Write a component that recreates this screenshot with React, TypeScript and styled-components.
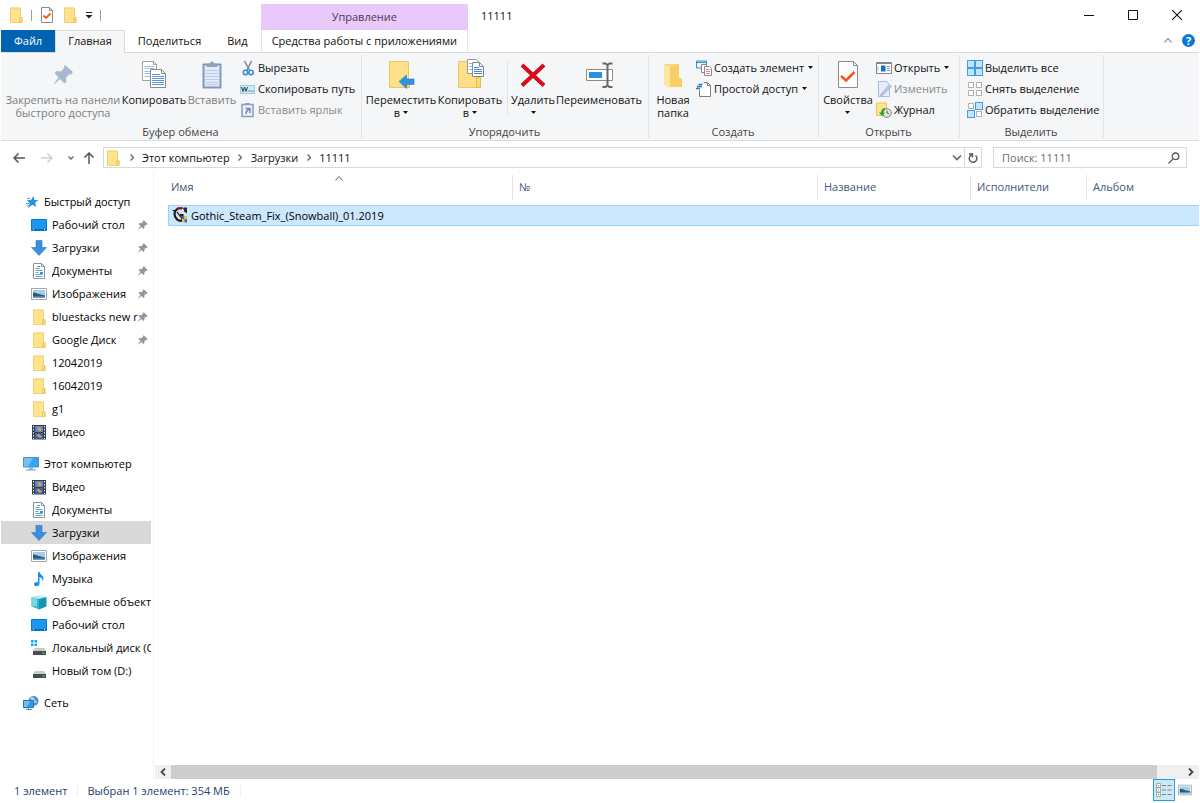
import React from 'react';
import styled, { createGlobalStyle } from 'styled-components';

const Global = createGlobalStyle`
  * { box-sizing: border-box; }
  body {
    margin: 0;
    background: #fff;
    color: #111;
    font: 11px/13px "Open Sans", "Noto Sans", sans-serif;
  }
  button, input { font: inherit; color: inherit; margin: 0; }
  button { border: 0; background: none; padding: 0; cursor: default; }
  svg { display: block; flex: none; }
  ul, ol { list-style: none; margin: 0; padding: 0; }
`;

/* ---------- icons ---------- */

type IconProps = { size?: number };

const Svg = ({ w, h, vb, children }: { w: number; h?: number; vb: string; children: React.ReactNode }) => (
  <svg width={w} height={h ?? w} viewBox={vb} fill="none" aria-hidden="true">{children}</svg>
);

const FolderIcon = ({ size = 16 }: IconProps) => (
  <Svg w={size} vb="0 0 16 16">
    <path d="M2 .5h10.500v10l1.500 1v4H2z" fill="#ffe38f" />
    <path d="M2.500 1h10v9.500h1.500v5H2.500z" stroke="#f0d070" />
    <path d="M11.500 15.500v-4l1-1.500 1.500 1v4.500z" fill="#f9da80" stroke="#e9c356" strokeWidth=".8" />
  </Svg>
);

const CheckDocIcon = ({ size = 16 }: IconProps) => (
  <Svg w={size} vb="0 0 16 16">
    <path d="M2.500.5h8l3 3v12h-11z" fill="#fff" stroke="#8c8c8c" />
    <path d="M10.500.5v3h3" stroke="#8c8c8c" />
    <path d="M4.500 8.500 7 11l4.500-4.500" stroke="#f0581e" strokeWidth="1.800" />
  </Svg>
);

const PropertiesIcon = () => (
  <Svg w={32} vb="0 0 32 32">
    <path d="M6.500 2.500h15l4 4v22h-19z" fill="#fdfdfd" stroke="#8c8c8c" />
    <path d="M21.500 2.500v4h4" stroke="#8c8c8c" />
    <path d="m9 17 5 4.500 8.500-8.500" stroke="#f0581e" strokeWidth="2.500" />
  </Svg>
);

const PinBigIcon = () => (
  <Svg w={32} vb="0 0 32 32">
    <path d="m18 6 8 7-2 2.500-1.500-.5-3.500 3.500.5 4-2 2-4.500-4.500L7.500 25l-.5-.5L11.500 18.500l-4-4.500 2-2 4.500.5 3.500-4-.8-1.500z" fill="#a9b8cd" />
  </Svg>
);

const CopyIcon = () => (
  <Svg w={32} vb="0 0 32 32">
    <path d="M4.500 2.500h11l3 3v16h-14z" fill="#fff" stroke="#a2a2a2" />
    <path d="M15.500 2.500v3h3" stroke="#a2a2a2" />
    <path d="M6.500 7.500h10M6.500 9.500h10M6.500 12.500h6M6.500 14.500h6M6.500 17.500h6" stroke="#9dbdea" />
    <path d="M12.500 10.500h11l4 4v14h-15z" fill="#fff" stroke="#8a8a8a" />
    <path d="M23.500 10.500v4h4" stroke="#8a8a8a" />
    <path d="M14 15.500h8M14 17.500h12M14 19.500h12M14 21.500h12M14 23.500h12M14 25.500h12" stroke="#5b93e0" />
  </Svg>
);

const PasteIcon = () => (
  <Svg w={32} vb="0 0 32 32">
    <path d="M7.500 5.500h17v23h-17z" fill="#e2eaf7" stroke="#8197bd" strokeWidth="2" />
    <path d="M11 8V4.500h3a2 2 0 0 1 4 0h3V8z" fill="#8fa0bd" />
    <path d="M9.500 11.500h13M9.500 14.500h13M9.500 17.500h13M9.500 20.500h13M9.500 23.500h13M9.500 25.500h13" stroke="#bccbe4" />
  </Svg>
);

const ScissorsIcon = () => (
  <Svg w={16} vb="0 0 16 16">
    <path d="m4.500 1 5.500 10M11.500 1l-5 10" stroke="#7b8794" strokeWidth="1.500" />
    <circle cx="5.500" cy="12.500" r="2.200" stroke="#2f8fd0" strokeWidth="1.600" />
    <circle cx="11" cy="12.500" r="2.200" stroke="#2f8fd0" strokeWidth="1.600" />
  </Svg>
);

const PathIcon = () => (
  <Svg w={16} vb="0 0 16 16">
    <path d="M.5 4.500h14v8H.5z" fill="#cfe9f8" stroke="#9ccbe6" />
    <path d="m1.500 6 1.500 4.500L4.500 6 6 10.500 7.500 6M8.500 10h1M10.500 10h1M12.500 10h1" stroke="#24384a" />
  </Svg>
);

const ShortcutIcon = () => (
  <Svg w={16} vb="0 0 16 16">
    <path d="M2 2.500h11v12H2z" fill="#eef3fb" stroke="#8ba0c4" strokeWidth="1.600" />
    <path d="M5 3V1h5v2z" fill="#8ba0c4" />
    <path d="M5.500 6.500h4.500V11M9.500 7C7 8 6 9 6 12" stroke="#7188b5" strokeWidth="1.500" />
  </Svg>
);

const MoveToIcon = () => (
  <Svg w={32} vb="0 0 32 32">
    <path d="M4.500 2.500h19v26h-19z" fill="#ffe08a" stroke="#ecc860" />
    <path d="M21.500 28.500v-6h3v6z" fill="#fbd978" stroke="#e6bd4d" />
    <path d="m14 22.500 7.500-6.500v4H29v5.500h-7.500v4z" fill="#2f93e0" stroke="#1f7cc6" strokeWidth=".6" />
  </Svg>
);

const CopyToIcon = () => (
  <Svg w={32} vb="0 0 32 32">
    <path d="M4.500 2.500h19v26h-19z" fill="#ffe08a" stroke="#ecc860" />
    <path d="M22.500 28.500v-10h4v10z" fill="#fbd978" stroke="#e6bd4d" />
    <path d="M13.500.5h9l3 3v11h-12z" fill="#fff" stroke="#9a9a9a" />
    <path d="M15 4.500h5M15 7.500h5M15 10.500h5" stroke="#8db4e8" />
    <path d="M18.500 3.500h7l4 4v10h-11z" fill="#fff" stroke="#808a96" />
    <path d="M25.500 3.500v4h4" stroke="#808a96" />
    <path d="M20 8.500h5M20 10.500h8M20 12.500h8M20 14.500h8" stroke="#3f83dc" />
  </Svg>
);

const DeleteIcon = () => (
  <Svg w={32} vb="0 0 32 32">
    <path d="m5 6 22 20.500M27 6 5 26.500" stroke="#d60b17" strokeWidth="4" />
  </Svg>
);

const RenameIcon = () => (
  <Svg w={32} vb="0 0 32 32">
    <path d="M3.500 10.500h26v11h-26z" fill="#fff" stroke="#8c8c8c" />
    <path d="M6 13h13v6H6z" fill="#2b8fe3" />
    <path d="M24.500 5v22M19.500 4.500h3l2 1.500 2-1.500h3M19.500 28h3l2-1.500 2 1.500h3" stroke="#666" strokeWidth="2" />
  </Svg>
);

const NewFolderIcon = () => (
  <Svg w={32} vb="0 0 32 32">
    <path d="M7 5h15v14l3 1v8H10z" fill="#fbd772" />
    <path d="m7 5 6 3v22l-6-4z" fill="#ffe6a0" />
    <path d="m13 8 9-3v14l3 1v8H13z" fill="#f7cf66" />
  </Svg>
);

const NewItemIcon = () => (
  <Svg w={16} vb="0 0 16 16">
    <path d="M.5 1h10v7H.5z" fill="#e4f3fc" stroke="#3c8dbb" />
    <path d="M.5 2.500h10" stroke="#3c8dbb" />
    <path d="M5.500 4.500h5v8h-5z" fill="#fff" stroke="#8a8a8a" />
    <path d="M8.500 6.500h5l2 2v7h-7z" fill="#fff" stroke="#8a8a8a" />
    <path d="M10 9.500h4M10 11.500h4M10 13.500h4" stroke="#c68ba0" />
  </Svg>
);

const EasyAccessIcon = () => (
  <Svg w={16} vb="0 0 16 16">
    <path d="M7.500 1.500h4l3 3v11h-11V9" fill="#fff" stroke="#808080" />
    <path d="M11.500 1.500v3h3" stroke="#808080" />
    <path d="M2.500 3.500h4M1 5.500h5M0 7.500h4" stroke="#2a78c2" strokeWidth="1.300" />
  </Svg>
);

const OpenIcon = () => (
  <Svg w={16} vb="0 0 16 16">
    <path d="M.5 2.500h15v11H.5z" fill="#fff" stroke="#7e868e" />
    <path d="M.5 3.500h15" stroke="#7e868e" />
    <path d="M5 5.500h4.500v6H5z" fill="#0f6fd0" />
    <path d="M2 6v5.500" stroke="#b9c2cc" />
    <path d="M11 6.500h3M11 8.500h3M11 10.500h3" stroke="#8a929a" />
  </Svg>
);

const EditIcon = () => (
  <Svg w={16} vb="0 0 16 16">
    <path d="M2.500.5h8l3 3v12h-11z" fill="#e6eefb" stroke="#a9bcdc" />
    <path d="m5 13 8.500-9.500 2 2L7 14l-3 1z" fill="#b8c9e4" stroke="#93a9cf" strokeWidth=".7" />
  </Svg>
);

const HistoryIcon = () => (
  <Svg w={16} vb="0 0 16 16">
    <path d="M.5 1h10v12.500H.5z" fill="#ffe48d" stroke="#e8c552" />
    <circle cx="11" cy="11" r="4.300" fill="#e4e8e6" stroke="#7d8583" />
    <path d="M11 8.500V11l2 1" stroke="#555" />
    <path d="M3 10.500h2c0-3 2-4.500 4-4.500v2c-1 .5-1.500 1.200-1.700 2.500H9l-2.800 3.700z" fill="#2aa62c" />
  </Svg>
);

const Cells = ({ on }: { on: boolean[] }) => (
  <Svg w={16} vb="0 0 16 16">
    {on.map((active, i) => {
      const x = (i % 2) * 8;
      const y = Math.floor(i / 2) * 8;
      return active
        ? <rect key={i} x={x + 0.5} y={y + 0.5} width="7" height="7" fill="#c3e4fb" stroke="#3f9fe6" />
        : <rect key={i} x={x + 1.5} y={y + 1.5} width="5" height="5" fill="#fff" stroke="#b3b3b3" />;
    })}
  </Svg>
);

const StarIcon = () => (
  <Svg w={16} vb="0 0 16 16">
    <path d="m10.500 2 .8 4h4.200l-3.300 2.500 1 4.500-3.800-2.300L5 14l1.700-4.700L4 6.300l4-.2z" fill="#2492dd" />
    <path d="M4 4.500h3M3 9.500h3M3.500 12h3" stroke="#4ba7e4" />
  </Svg>
);

const DesktopIcon = () => (
  <Svg w={16} vb="0 0 16 16">
    <path d="M.5 2.500h15v11H.5z" fill="#1a97f0" stroke="#0c78cb" />
    <path d="M1 12.500h14" stroke="#0a66b5" />
    <path d="M2 12.500h1M13 12.500h1" stroke="#bfe2ff" />
  </Svg>
);

const DownloadIcon = () => (
  <Svg w={16} vb="0 0 16 16">
    <path d="M5 .5h6v7h4.500L8 15.500.5 7.500H5z" fill="#3c8fdc" stroke="#2b78c2" strokeWidth=".6" />
  </Svg>
);

const DocumentIcon = () => (
  <Svg w={16} vb="0 0 16 16">
    <path d="M2.500.5h8l3 3v12h-11z" fill="#fff" stroke="#8d9499" />
    <path d="M10.500.5v3h3" stroke="#8d9499" />
    <path d="M6 3.500h3M4.500 5.500h4M4.500 7.500h7M4.500 9.500h3M4.500 11.500h7M4.500 13.500h7" stroke="#5ba6d8" />
    <path d="M9 9h3v2H9z" fill="#3b92cc" />
  </Svg>
);

const PictureIcon = ({ size = 16 }: IconProps) => (
  <Svg w={size} vb="0 0 16 16">
    <path d="M.5 2.500h15v11H.5z" fill="#fff" stroke="#a8a8a8" />
    <path d="M2 4h12v8H2z" fill="#9fd0f2" />
    <path d="M2 6.500c3 0 6 2 12 3V11H2z" fill="#33586e" />
    <path d="M2 10.500h12V12H2z" fill="#5ea3dc" />
  </Svg>
);

const VideoIcon = () => (
  <Svg w={16} vb="0 0 16 16">
    <path d="M1 1h14v14.500H1z" fill="#3a3f45" />
    <path d="M4 2h8v6H4z" fill="#5b86d8" />
    <path d="M4 9h8v6H4z" fill="#3565b8" />
    <path d="M6 3.500 9 3l2 3-3 1.500zM5 11l3-1 3 2.500-2 1.500z" fill="#d8a13b" />
    <path d="M2.500 2v13M13.500 2v13" stroke="#e8e8e8" strokeDasharray="1.500 1.500" />
  </Svg>
);

const ComputerIcon = () => (
  <Svg w={16} vb="0 0 16 16">
    <path d="M.5 1.500h15v9.500H.5z" fill="#3aa4ee" stroke="#4e90bf" />
    <path d="M1 2h9L5 10.500H1z" fill="#70c2f7" />
    <path d="M6 11.500h4v2H6z" fill="#8fb5cf" />
    <path d="M3 14h10" stroke="#6c9ab9" />
  </Svg>
);

const MusicIcon = () => (
  <Svg w={16} vb="0 0 16 16">
    <path d="M7 1h1.500c.3 2.500 4 3 4 6.500 0 1-.3 2-.9 2.800.2-2.300-1-3.500-3.100-4v6.200c0 1.700-1.300 2.800-3 2.800-1.500 0-2.500-.8-2.500-2 0-1.500 1.500-2.500 4-2.200z" fill="#1e90e8" />
  </Svg>
);

const CubeIcon = () => (
  <Svg w={16} vb="0 0 16 16">
    <path d="m.5 3 7.500-2 7.500 2L8 5z" fill="#bcecf4" />
    <path d="M.5 3 8 5v10.500l-7.500-3z" fill="#37b7cf" />
    <path d="M15.500 3 8 5v10.500l7.500-3z" fill="#1593b1" />
    <path d="m.5 3 5.500 1.500V12l-5.500.5z" fill="#74d6e4" />
  </Svg>
);

const Drive = ({ system }: { system?: boolean }) => (
  <Svg w={16} vb="0 0 16 16">
    {system && <path d="M0 0h2.500v2.500H0zM3.500 0H6v2.500H3.500zM0 3.500h2.500V6H0zM3.500 3.500H6V6H3.500z" fill="#16a5e8" />}
    <path d="m4 8h9l2 3H2z" fill="#c9cccf" />
    <path d="M2 11h13v4H2z" fill="#4a4d50" />
    <path d="M11.500 13h2" stroke="#49e04b" strokeWidth="1.300" />
  </Svg>
);

const NetworkIcon = () => (
  <Svg w={16} vb="0 0 16 16">
    <circle cx="10.500" cy="6" r="5" fill="#4b93c4" />
    <path d="M7 3c2-2 3-1 4 0s1 3 3 4c-1 2-4 1-5-1S8 5 7 3z" fill="#a8cfe6" />
    <path d="M.5 5.500h10v7H.5z" fill="#2f9ae6" stroke="#2b75aa" />
    <path d="M1 6h6l-3 6H1z" fill="#6dbef5" />
    <path d="M3 14.500h6M5.500 13v1" stroke="#4b88b2" />
  </Svg>
);

const PinIcon = () => (
  <Svg w={10} vb="0 0 10 10">
    <path d="M5.800.3 9.700 4l-1 .9-.8-.2-1.600 1.700.2 1.700-1 1-2.100-2.200L.5 9.500 0 9.300 2.500 6 .5 4l1-1 1.800.2L5 1.800l-.1-.7z" fill="#8f99a3" />
  </Svg>
);

const GothicIcon = () => (
  <Svg w={16} vb="0 0 16 16">
    <path d="M10 1.500C6 .5 2.500 3 2.500 7s4 8 8 6.500V8H8" stroke="#1b1b1b" strokeWidth="2.200" />
    <path d="M.5 3.500h3" stroke="#1b1b1b" />
    <path d="M5 1.500C8 0 11 .5 13 3" stroke="#c6201c" strokeWidth="1.300" />
    <path d="M12 .5h3v6l-3-2z" fill="#2a2a2a" />
    <path d="m5 5 7 9" stroke="#8a1515" strokeWidth="1.300" />
    <path d="M10 9h2.500v3H10z" fill="#2d6fd6" />
    <path d="M12.500 9H15v3h-2.500z" fill="#f1c232" />
    <path d="M10 12h2.500v3.500H10z" fill="#f1c232" />
    <path d="M12.500 12H15v3.500h-2.500z" fill="#2d6fd6" />
  </Svg>
);

const DetailsIcon = () => (
  <Svg w={16} vb="0 0 16 16">
    <path d="M.5 1.500h4v4h-4zM.5 6h4v4h-4zM.5 10.500h4v4h-4z" fill="#fff" stroke="#a5a9ad" />
    <path d="M2 3.500h1M2 12.500h1" stroke="#d0574d" />
    <path d="M2 8h1" stroke="#4d9cd0" />
    <path d="M6 3.500h4M11.500 3.500h4M6 8h4M11.500 8h4M6 12.500h4M11.500 12.500h4" stroke="#7a8187" />
  </Svg>
);

const Caret = () => (
  <Svg w={5} h={3} vb="0 0 5 3"><path d="M0 0h5L2.500 3z" fill="#111" /></Svg>
);

const CustomizeIcon = () => (
  <Svg w={8} h={7} vb="0 0 8 7"><path d="M1 .5h6" stroke="#222" /><path d="M.5 3h7L4 6.500z" fill="#222" /></Svg>
);

const Chevron = ({ d, w = 8, h = 8, color = '#666', weight = 1.3 }: { d: string; w?: number; h?: number; color?: string; weight?: number }) => (
  <Svg w={w} h={h} vb={`0 0 ${w} ${h}`}><path d={d} stroke={color} strokeWidth={weight} /></Svg>
);

/* ---------- window frame ---------- */

const Window = styled.div`
  display: flex;
  flex-direction: column;
  min-height: 100vh;
  padding: 0 1px;
`;

const Header = styled.header`
  display: grid;
  grid-template-columns: auto auto 1fr;
`;

const HeaderStack = styled.div`
  display: grid;
  grid-template-rows: 30px 22px;
  min-width: 0;
`;

const QuickAccess = styled.div`
  display: flex;
  align-items: center;
  gap: 7px;
  padding-left: 7px;
`;

const ToolButton = styled.button`
  display: flex;
  align-items: center;
  justify-content: center;
`;

const Divider = styled.span<{ $h: number; $color?: string }>`
  width: 1px;
  height: ${p => p.$h}px;
  background: ${p => p.$color ?? '#9a9a9a'};
`;

const Tabs = styled.nav`
  display: flex;
`;

const Tab = styled.button<{ $kind?: 'file' | 'active' }>`
  position: relative;
  z-index: 1;
  padding: 0 13px 1px;
  white-space: nowrap;
  ${p => p.$kind === 'file' && 'background: #0063b1; color: #fff;'}
  ${p => p.$kind === 'active' && `
    background: #f5f6f7;
    border: 1px solid #dadbdc;
    border-bottom: 0;
    padding: 0 12px 3px;
    margin-bottom: -1px;
  `}
`;

const ContextTitle = styled.div`
  display: grid;
  place-items: center;
  margin-top: 4px;
  padding-bottom: 2px;
  background: #e9c9fc;
  color: #4a3a55;
`;

const ContextTab = styled(Tab)`
  padding: 0 10px 1px;
  border: solid #e4e4e4;
  border-width: 0 1px;
`;

const TitleRow = styled.div`
  display: flex;
  align-items: center;
  padding-left: 13px;
`;

const TitleText = styled.h1`
  flex: 1;
  margin: 0;
  font-size: 11px;
  font-weight: 400;
`;

const CaptionButton = styled(ToolButton)`
  width: 44px;
  height: 28px;
`;

const HelpRow = styled.div`
  display: flex;
  align-items: center;
  justify-content: flex-end;
  gap: 10px;
  padding: 0 4px 2px 0;
`;

const HelpButton = styled.button`
  width: 13px;
  height: 13px;
  border-radius: 50%;
  background: #0b78d7;
  color: #fff;
  font-weight: 700;
`;

/* ---------- ribbon ---------- */

const Ribbon = styled.div`
  display: flex;
  background: #f5f6f7;
  border: solid #dadbdc;
  border-width: 1px 0;
`;

const Group = styled.section<{ $w: number }>`
  display: flex;
  flex-direction: column;
  flex: 0 1 ${p => p.$w}px;
  height: 87px;
  padding-left: 4px;
  background: linear-gradient(#e2e3e4, #e2e3e4) right 2px / 1px 83px no-repeat;
`;

const GroupBody = styled.div`
  display: flex;
  flex: 1;
  align-items: flex-start;
`;

const GroupName = styled.h2`
  margin: 0 0 2px;
  padding-right: 6px;
  font-size: 11px;
  font-weight: 400;
  text-align: center;
  color: #444;
`;

const BigButton = styled.button<{ $w: number }>`
  display: flex;
  flex-direction: column;
  align-items: center;
  gap: 2px;
  flex: none;
  width: ${p => p.$w}px;
  padding-top: 6px;
  white-space: nowrap;
  &:disabled { color: #7d7d7d; }
`;

const BigLabel = styled.span`
  display: flex;
  flex-direction: column;
  align-items: center;
`;

const LabelLine = styled.span`
  display: flex;
  align-items: center;
  gap: 3px;
  min-height: 13px;
`;

const SmallColumn = styled.div`
  display: flex;
  flex-direction: column;
  align-items: flex-start;
  padding: 4px 0 0 3px;
`;

const SmallButton = styled.button`
  display: flex;
  align-items: center;
  gap: 2px;
  height: 21px;
  white-space: nowrap;
  &:disabled { color: #8a8a8a; }
`;

const SmallLabel = styled.span`
  padding: 0 2px 1px 0;
`;

const BodyDivider = styled(Divider)`
  margin: 8px 3px 0;
`;

const Big = ({ icon, lines, w, caret, disabled }: { icon: React.ReactNode; lines: string[]; w: number; caret?: boolean; disabled?: boolean }) => (
  <BigButton $w={w} disabled={disabled}>
    {icon}
    <BigLabel>
      {lines.map((line, i) => (
        <LabelLine key={i}>{line}{caret && i === lines.length - 1 && <Caret />}</LabelLine>
      ))}
    </BigLabel>
  </BigButton>
);

const Small = ({ icon, label, caret, disabled }: { icon: React.ReactNode; label: string; caret?: boolean; disabled?: boolean }) => (
  <SmallButton disabled={disabled}>{icon}<SmallLabel>{label}</SmallLabel>{caret && <Caret />}</SmallButton>
);

/* ---------- address bar ---------- */

const AddressRow = styled.div`
  display: flex;
  align-items: center;
  padding: 6px 12px 3px 8px;
`;

const NavButton = styled(ToolButton)<{ $w: number }>`
  width: ${p => p.$w}px;
  height: 20px;
`;

const AddressBox = styled.div`
  display: flex;
  flex: 1;
  height: 21px;
  margin: 0 11px 0 2px;
  border: 1px solid #d9d9d9;
`;

const Crumbs = styled.ol`
  display: flex;
  flex: 1;
  align-items: center;
  padding-left: 1px;
`;

const Crumb = styled.li`
  display: flex;
  align-items: center;
`;

const CrumbLink = styled.a`
  padding-bottom: 1px;
  color: inherit;
  text-decoration: none;
`;

const CrumbArrow = styled.span`
  display: flex;
  justify-content: center;
  width: 21px;
`;

const RefreshButton = styled(ToolButton)`
  width: 17px;
  border-left: 1px solid #d9d9d9;
`;

const SearchBox = styled.label`
  display: flex;
  align-items: center;
  width: 194px;
  height: 21px;
  padding: 0 6px 0 8px;
  border: 1px solid #d9d9d9;
`;

const SearchInput = styled.input`
  flex: 1;
  min-width: 0;
  padding: 0 0 1px;
  border: 0;
  outline: 0;
  background: none;
  &::placeholder { color: #6d6d6d; opacity: 1; }
`;

/* ---------- body ---------- */

const Body = styled.div`
  display: flex;
  flex: 1;
`;

const Sidebar = styled.nav`
  display: flex;
  flex-direction: column;
  gap: 9px;
  flex: none;
  width: 153px;
  padding: 19px 2px 0 0;
  border-right: 1px solid #f3f3f3;
  color: #000;
`;

const TreeItem = styled.a<{ $level: number; $selected?: boolean }>`
  display: flex;
  align-items: center;
  gap: 5px;
  height: 23px;
  padding-left: ${p => 14 + p.$level * 8}px;
  color: inherit;
  text-decoration: none;
  white-space: nowrap;
  background: ${p => (p.$selected ? '#d9d9d9' : 'transparent')};
`;

const TreeLabel = styled.span<{ $pinned?: boolean }>`
  flex: 1;
  overflow: hidden;
  min-width: 0;
  line-height: 17px;
  margin-right: ${p => (p.$pinned ? '-5px' : '0')};
`;

const PinSlot = styled.span`
  margin-right: 3px;
`;

const Main = styled.main`
  display: flex;
  flex: 1;
  flex-direction: column;
  min-width: 0;
  padding-left: 1px;
`;

const ListArea = styled.div`
  flex: 1;
  padding: 4px 0 0 13px;
`;

const FileTable = styled.table`
  width: 100%;
  table-layout: fixed;
  border-spacing: 0;
`;

const Th = styled.th<{ $w?: number }>`
  position: relative;
  width: ${p => (p.$w ? `${p.$w}px` : 'auto')};
  padding: 0 0 5px;
  font-weight: 400;
  text-align: left;
  color: #44587c;
`;

const ThLabel = styled.div<{ $first?: boolean; $last?: boolean }>`
  height: 25px;
  padding-left: ${p => (p.$first ? 3 : 6)}px;
  line-height: 24px;
  border-right: ${p => (p.$last ? 0 : 1)}px solid #e3e3e3;
`;

const SortMark = styled.span`
  position: absolute;
  top: 1px;
  left: 50%;
  margin-left: -6px;
`;

const Td = styled.td`
  height: 21px;
  padding: 0;
  background: #cce8ff;
  border: solid #99d1ff;
  border-width: 1px 0;
  &:first-child { border-left-width: 1px; }
`;

const FileName = styled.span`
  display: flex;
  align-items: center;
  gap: 3px;
  padding: 0 0 1px 3px;
  white-space: nowrap;
  color: #000;
`;

const ScrollBar = styled.div`
  display: flex;
  height: 14px;
  background: #f0f0f0;
`;

const ScrollButton = styled(ToolButton)`
  width: 16px;
`;

const ScrollTrack = styled.div`
  flex: 1;
  padding-right: 26px;
`;

const ScrollThumb = styled.div`
  height: 100%;
  background: #cdcdcd;
`;

const StatusBar = styled.footer`
  display: flex;
  align-items: center;
  height: 24px;
  padding: 0 6px 2px 13px;
  color: #26406e;
`;

const StatusText = styled.span`
  padding-right: 10px;
  margin-right: 9px;
  border-right: 1px solid #f0f0f0;
`;

const ViewButtons = styled.div`
  display: flex;
  gap: 2px;
  margin-left: auto;
`;

const ViewButton = styled(ToolButton)<{ $on?: boolean }>`
  width: ${p => (p.$on ? 22 : 16)}px;
  height: 22px;
  background: ${p => (p.$on ? '#cbe8f6' : 'none')};
  border: ${p => (p.$on ? '1px solid #26a0da' : '0')};
`;

/* ---------- data ---------- */

type Node = { label: string; icon: React.ReactNode; pinned?: boolean; selected?: boolean };

const sections: { root: Node; items: Node[] }[] = [
  {
    root: { label: 'Быстрый доступ', icon: <StarIcon /> },
    items: [
      { label: 'Рабочий стол', icon: <DesktopIcon />, pinned: true },
      { label: 'Загрузки', icon: <DownloadIcon />, pinned: true },
      { label: 'Документы', icon: <DocumentIcon />, pinned: true },
      { label: 'Изображения', icon: <PictureIcon />, pinned: true },
      { label: 'bluestacks new r', icon: <FolderIcon />, pinned: true },
      { label: 'Google Диск', icon: <FolderIcon />, pinned: true },
      { label: '12042019', icon: <FolderIcon /> },
      { label: '16042019', icon: <FolderIcon /> },
      { label: 'g1', icon: <FolderIcon /> },
      { label: 'Видео', icon: <VideoIcon /> },
    ],
  },
  {
    root: { label: 'Этот компьютер', icon: <ComputerIcon /> },
    items: [
      { label: 'Видео', icon: <VideoIcon /> },
      { label: 'Документы', icon: <DocumentIcon /> },
      { label: 'Загрузки', icon: <DownloadIcon />, selected: true },
      { label: 'Изображения', icon: <PictureIcon /> },
      { label: 'Музыка', icon: <MusicIcon /> },
      { label: 'Объемные объекты', icon: <CubeIcon /> },
      { label: 'Рабочий стол', icon: <DesktopIcon /> },
      { label: 'Локальный диск (C:)', icon: <Drive system /> },
      { label: 'Новый том (D:)', icon: <Drive /> },
    ],
  },
  { root: { label: 'Сеть', icon: <NetworkIcon /> }, items: [] },
];

const Tree = ({ node, level }: { node: Node; level: number }) => (
  <li>
    <TreeItem href="#" $level={level} $selected={node.selected}>
      {node.icon}
      <TreeLabel $pinned={node.pinned}>{node.label}</TreeLabel>
      {node.pinned && <PinSlot><PinIcon /></PinSlot>}
    </TreeItem>
  </li>
);

const crumbs = ['Этот компьютер', 'Загрузки', '11111'];

const columns: { label: string; w?: number }[] = [
  { label: 'Имя', w: 345 },
  { label: '№', w: 305 },
  { label: 'Название', w: 153 },
  { label: 'Исполнители', w: 116 },
  { label: 'Альбом' },
];

export default function App() {
  return (
    <>
      <Global />
      <Window>
        <Header>
          <HeaderStack>
            <QuickAccess>
              <ToolButton aria-label="Папка"><FolderIcon /></ToolButton>
              <Divider $h={11} />
              <ToolButton aria-label="Свойства"><CheckDocIcon /></ToolButton>
              <ToolButton aria-label="Новая папка"><FolderIcon /></ToolButton>
              <ToolButton aria-label="Настройка панели"><CustomizeIcon /></ToolButton>
              <Divider $h={11} />
            </QuickAccess>
            <Tabs>
              <Tab $kind="file">Файл</Tab>
              <Tab $kind="active">Главная</Tab>
              <Tab>Поделиться</Tab>
              <Tab>Вид</Tab>
            </Tabs>
          </HeaderStack>
          <HeaderStack>
            <ContextTitle>Управление</ContextTitle>
            <ContextTab>Средства работы с приложениями</ContextTab>
          </HeaderStack>
          <HeaderStack>
            <TitleRow>
              <TitleText>11111</TitleText>
              <CaptionButton aria-label="Свернуть"><Chevron w={10} h={10} d="M0 5.500h10" color="#111" weight={1} /></CaptionButton>
              <CaptionButton aria-label="Развернуть"><Chevron w={10} h={10} d="M.5.5h9v9h-9z" color="#111" weight={1} /></CaptionButton>
              <CaptionButton aria-label="Закрыть"><Chevron w={10} h={10} d="m0 0 10 10M10 0 0 10" color="#111" weight={1.1} /></CaptionButton>
            </TitleRow>
            <HelpRow>
              <ToolButton aria-label="Свернуть ленту"><Chevron w={8} h={5} d="m.5 4.500 3.500-4 3.500 4" color="#999" /></ToolButton>
              <HelpButton aria-label="Справка">?</HelpButton>
            </HelpRow>
          </HeaderStack>
        </Header>

        <Ribbon>
          <Group $w={361}>
            <GroupBody>
              <Big w={116} icon={<PinBigIcon />} lines={['Закрепить на панели', 'быстрого доступа']} disabled />
              <Big w={66} icon={<CopyIcon />} lines={['Копировать']} />
              <Big w={50} icon={<PasteIcon />} lines={['Вставить']} disabled />
              <SmallColumn>
                <Small icon={<ScissorsIcon />} label="Вырезать" />
                <Small icon={<PathIcon />} label="Скопировать путь" />
                <Small icon={<ShortcutIcon />} label="Вставить ярлык" disabled />
              </SmallColumn>
            </GroupBody>
            <GroupName>Буфер обмена</GroupName>
          </Group>
          <Group $w={287}>
            <GroupBody>
              <Big w={70} icon={<MoveToIcon />} lines={['Переместить', 'в']} caret />
              <Big w={68} icon={<CopyToIcon />} lines={['Копировать', 'в']} caret />
              <BodyDivider $h={54} $color="#e2e3e4" />
              <Big w={44} icon={<DeleteIcon />} lines={['Удалить', '']} caret />
              <Big w={88} icon={<RenameIcon />} lines={['Переименовать']} />
            </GroupBody>
            <GroupName>Упорядочить</GroupName>
          </Group>
          <Group $w={170}>
            <GroupBody>
              <Big w={40} icon={<NewFolderIcon />} lines={['Новая', 'папка']} />
              <SmallColumn>
                <Small icon={<NewItemIcon />} label="Создать элемент" caret />
                <Small icon={<EasyAccessIcon />} label="Простой доступ" caret />
              </SmallColumn>
            </GroupBody>
            <GroupName>Создать</GroupName>
          </Group>
          <Group $w={141}>
            <GroupBody>
              <Big w={50} icon={<PropertiesIcon />} lines={['Свойства', '']} caret />
              <SmallColumn>
                <Small icon={<OpenIcon />} label="Открыть" caret />
                <Small icon={<EditIcon />} label="Изменить" disabled />
                <Small icon={<HistoryIcon />} label="Журнал" />
              </SmallColumn>
            </GroupBody>
            <GroupName>Открыть</GroupName>
          </Group>
          <Group $w={144}>
            <GroupBody>
              <SmallColumn>
                <Small icon={<Cells on={[true, true, true, true]} />} label="Выделить все" />
                <Small icon={<Cells on={[false, false, false, false]} />} label="Снять выделение" />
                <Small icon={<Cells on={[false, true, true, false]} />} label="Обратить выделение" />
              </SmallColumn>
            </GroupBody>
            <GroupName>Выделить</GroupName>
          </Group>
        </Ribbon>

        <AddressRow>
          <NavButton $w={20} aria-label="Назад"><Chevron w={12} h={10} d="M12 5H1M5.500.5 1 5l4.500 4.500" color="#555" weight={1.5} /></NavButton>
          <NavButton $w={36} aria-label="Вперёд"><Chevron w={12} h={10} d="M0 5h11M6.500.5 11 5 6.500 9.500" color="#d0d0d0" weight={1.5} /></NavButton>
          <NavButton $w={12} aria-label="Последние расположения"><Chevron w={6} h={4} d="M.5.5 3 3 5.500.5" /></NavButton>
          <NavButton $w={24} aria-label="Вверх"><Chevron w={12} h={12} d="M6 12V1M1.500 5.500 6 1l4.500 4.500" color="#555" weight={1.5} /></NavButton>
          <AddressBox>
            <Crumbs>
              <FolderIcon />
              {crumbs.map(c => (
                <Crumb key={c}>
                  <CrumbArrow><Chevron w={4} h={7} d="m.5.5 3 3-3 3" /></CrumbArrow>
                  <CrumbLink href="#">{c}</CrumbLink>
                </Crumb>
              ))}
            </Crumbs>
            <ToolButton aria-label="Журнал адресов"><Chevron w={14} h={6} d="m3 .5 4 4 4-4" weight={1.6} /></ToolButton>
            <RefreshButton aria-label="Обновить">
              <Chevron w={10} h={10} d="M3.500 2a3.800 3.800 0 1 0 4 .5M1 1h3.500v3.500" color="#555" weight={1.4} />
            </RefreshButton>
          </AddressBox>
          <SearchBox>
            <SearchInput type="search" aria-label="Поиск" placeholder="Поиск: 11111" />
            <Chevron w={12} h={12} d="M5 7 .5 11.500M7.500 1a3.300 3.300 0 1 1 0 6.600 3.300 3.300 0 0 1 0-6.600z" color="#555" weight={1.3} />
          </SearchBox>
        </AddressRow>

        <Body>
          <Sidebar>
            {sections.map(s => (
              <ul key={s.root.label}>
                <Tree node={s.root} level={1} />
                {s.items.map(n => <Tree key={n.label} node={n} level={2} />)}
              </ul>
            ))}
          </Sidebar>
          <Main>
            <ListArea>
              <FileTable>
                <thead>
                  <tr>
                    {columns.map((c, i) => (
                      <Th key={c.label} $w={c.w} scope="col">
                        <ThLabel $first={i === 0} $last={i === columns.length - 1}>{c.label}</ThLabel>
                        {i === 0 && <SortMark><Chevron w={8} h={5} d="m.5 4.500 3.500-4 3.500 4" weight={1} /></SortMark>}
                      </Th>
                    ))}
                  </tr>
                </thead>
                <tbody>
                  <tr>
                    <Td><FileName><GothicIcon />Gothic_Steam_Fix_(Snowball)_01.2019</FileName></Td>
                    <Td /><Td /><Td /><Td />
                  </tr>
                </tbody>
              </FileTable>
            </ListArea>
            <ScrollBar>
              <ScrollButton aria-label="Влево"><Chevron w={6} h={8} d="M5 .5 1.500 4 5 7.500" color="#444" weight={1.8} /></ScrollButton>
              <ScrollTrack><ScrollThumb /></ScrollTrack>
              <ScrollButton aria-label="Вправо"><Chevron w={6} h={8} d="M1 .5 4.500 4 1 7.500" color="#444" weight={1.8} /></ScrollButton>
            </ScrollBar>
          </Main>
        </Body>

        <StatusBar>
          <StatusText>1 элемент</StatusText>
          <StatusText>Выбран 1 элемент: 354 МБ</StatusText>
          <ViewButtons>
            <ViewButton $on aria-label="Таблица"><DetailsIcon /></ViewButton>
            <ViewButton aria-label="Крупные значки"><PictureIcon size={14} /></ViewButton>
          </ViewButtons>
        </StatusBar>
      </Window>
    </>
  );
}
